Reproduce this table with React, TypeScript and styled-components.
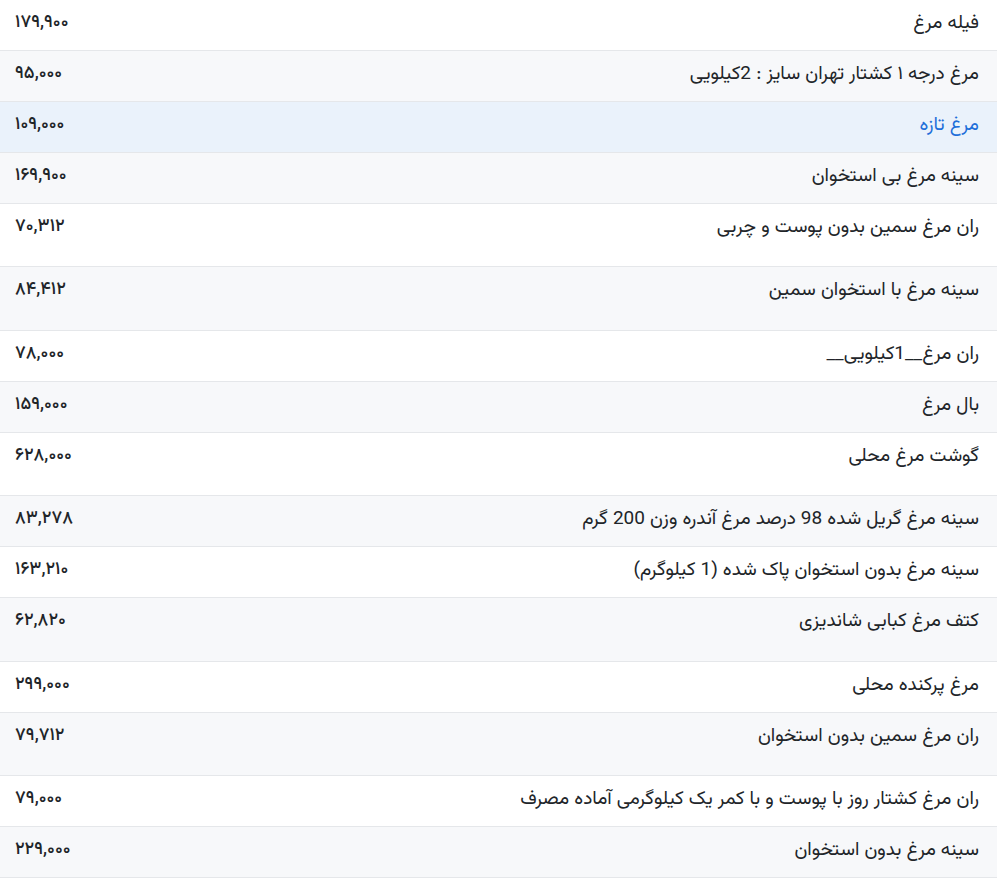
import styled, { createGlobalStyle } from 'styled-components'

interface PriceRow {
  name: string
  price: string
  tall?: boolean
  active?: boolean
}

const rows: PriceRow[] = [
  { name: 'فیله مرغ', price: '۱۷۹,۹۰۰' },
  { name: 'مرغ درجه ۱ کشتار تهران سایز : 2کیلویی', price: '۹۵,۰۰۰' },
  { name: 'مرغ تازه', price: '۱۰۹,۰۰۰', active: true },
  { name: 'سینه مرغ بی استخوان', price: '۱۶۹,۹۰۰' },
  { name: 'ران مرغ سمین بدون پوست و چربی', price: '۷۰,۳۱۲', tall: true },
  { name: 'سینه مرغ با استخوان سمین', price: '۸۴,۴۱۲', tall: true },
  { name: 'ران مرغ__1کیلویی__', price: '۷۸,۰۰۰' },
  { name: 'بال مرغ', price: '۱۵۹,۰۰۰' },
  { name: 'گوشت مرغ محلی', price: '۶۲۸,۰۰۰', tall: true },
  { name: 'سینه مرغ گریل شده 98 درصد مرغ آندره وزن 200 گرم', price: '۸۳,۲۷۸' },
  { name: 'سینه مرغ بدون استخوان پاک شده (1 کیلوگرم)', price: '۱۶۳,۲۱۰' },
  { name: 'کتف مرغ کبابی شاندیزی', price: '۶۲,۸۲۰', tall: true },
  { name: 'مرغ پرکنده محلی', price: '۲۹۹,۰۰۰' },
  { name: 'ران مرغ سمین بدون استخوان', price: '۷۹,۷۱۲', tall: true },
  { name: 'ران مرغ کشتار روز با پوست و با کمر یک کیلوگرمی آماده مصرف', price: '۷۹,۰۰۰' },
  { name: 'سینه مرغ بدون استخوان', price: '۲۲۹,۰۰۰' },
]

const GlobalStyle = createGlobalStyle`
  html, body {
    margin: 0;
    padding: 0;
    background: #fff;
  }
  body {
    font-family: 'Vazirmatn', 'DejaVu Sans', sans-serif;
    color: #212529;
  }
`

const Table = styled.div`
  direction: rtl;
  display: flex;
  flex-direction: column;
  width: 100%;
`

// tall rows leave room under the text, as in the source table
const Row = styled.div<{ $striped: boolean; $active?: boolean; $tall?: boolean }>`
  display: grid;
  grid-template-columns: 1fr auto;
  align-items: start;
  height: ${({ $tall }) => ($tall ? '63.4px' : '51px')};
  box-sizing: border-box;
  border-bottom: 1px solid #e5e7ea;
  background: ${({ $striped, $active }) => ($active ? '#eaf2fb' : $striped ? '#f7f8fa' : '#fff')};
  color: ${({ $active }) => ($active ? '#1e6fd9' : '#212529')};
`

const Name = styled.div`
  padding: 11px 18px 0 12px;
  font-size: 19px;
  line-height: 26px;
`

const Price = styled.div`
  direction: ltr;
  padding: 10px 12px 0 15px;
  font-size: 18px;
  line-height: 26px;
  font-weight: 500;
  color: #212529;
`

export default function App() {
  return (
    <>
      <GlobalStyle />
      <Table>
        {rows.map((row, i) => (
          <Row key={i} $striped={i % 2 === 1} $active={row.active} $tall={row.tall}>
            <Name>{row.name}</Name>
            <Price>{row.price}</Price>
          </Row>
        ))}
      </Table>
    </>
  )
}
